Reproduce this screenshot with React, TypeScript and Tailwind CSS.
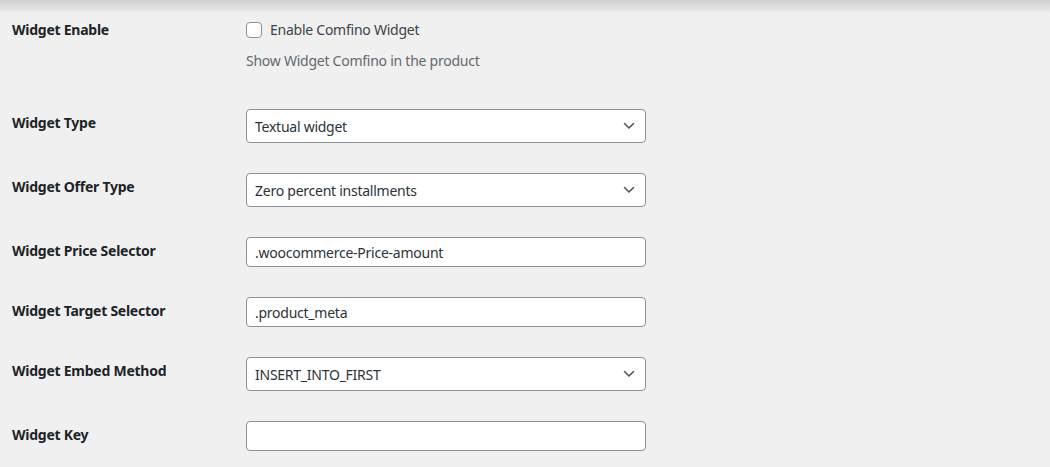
import React from "react";

const font = { fontFamily: '"Noto Sans", "Open Sans", sans-serif', letterSpacing: "-0.25px" };

function Chevron() {
  return (
    <svg width="12" height="8" viewBox="0 0 12 8" className="absolute right-[10px] top-1/2 -translate-y-1/2">
      <path d="M1.5 1.5 L6 6 L10.5 1.5" fill="none" stroke="#50575e" strokeWidth="1.6" strokeLinecap="round" strokeLinejoin="round" />
    </svg>
  );
}

function Select({ value }: { value: string }) {
  return (
    <div className="relative w-[400px] h-[34px] bg-white border border-[#8c8f94] rounded-[4px] flex items-center pl-[8px] text-[14px] text-[#2c3338]">
      <span>{value}</span>
      <Chevron />
    </div>
  );
}

function Input({ value }: { value: string }) {
  return (
    <div className="w-[400px] h-[30px] bg-white border border-[#8c8f94] rounded-[4px] flex items-center pl-[8px] text-[14px] text-[#2c3338]">
      <span>{value}</span>
    </div>
  );
}

function Row({ label, children }: { label: string; children: React.ReactNode }) {
  return (
    <div className="flex">
      <div className="w-[246px] shrink-0 pl-[12px] pt-[20px] text-[14px] leading-[18px] font-bold text-[#1d2327]">{label}</div>
      <div className="py-[15px]">{children}</div>
    </div>
  );
}

export default function App() {
  return (
    <div className="relative w-[1050px] h-[467px] bg-[#f0f0f1] overflow-hidden" style={font}>
      <div className="pointer-events-none absolute inset-x-0 top-0 h-[14px] bg-gradient-to-b from-[#cfcfd1] to-[#f0f0f1]" />
      <div className="flex flex-col pt-[1px]">
        <div className="flex">
          <div className="w-[246px] shrink-0 pl-[12px] pt-[20px] text-[14px] leading-[18px] font-bold text-[#1d2327]">Widget Enable</div>
          <div className="pt-[15px] pb-[23px]">
            <div className="h-[27px] flex items-center gap-[8px] text-[14px] text-[#3c434a]">
              <span className="w-[16px] h-[16px] bg-white border border-[#8c8f94] rounded-[4px] inline-block" />
              <span>Enable Comfino Widget</span>
            </div>
            <div className="mt-[7px] h-[21px] leading-[21px] text-[14px] text-[#646970]">Show Widget Comfino in the product</div>
          </div>
        </div>
        <Row label="Widget Type"><Select value="Textual widget" /></Row>
        <Row label="Widget Offer Type"><Select value="Zero percent installments" /></Row>
        <Row label="Widget Price Selector"><Input value=".woocommerce-Price-amount" /></Row>
        <Row label="Widget Target Selector"><Input value=".product_meta" /></Row>
        <Row label="Widget Embed Method"><Select value="INSERT_INTO_FIRST" /></Row>
        <Row label="Widget Key"><Input value="" /></Row>
      </div>
    </div>
  );
}
